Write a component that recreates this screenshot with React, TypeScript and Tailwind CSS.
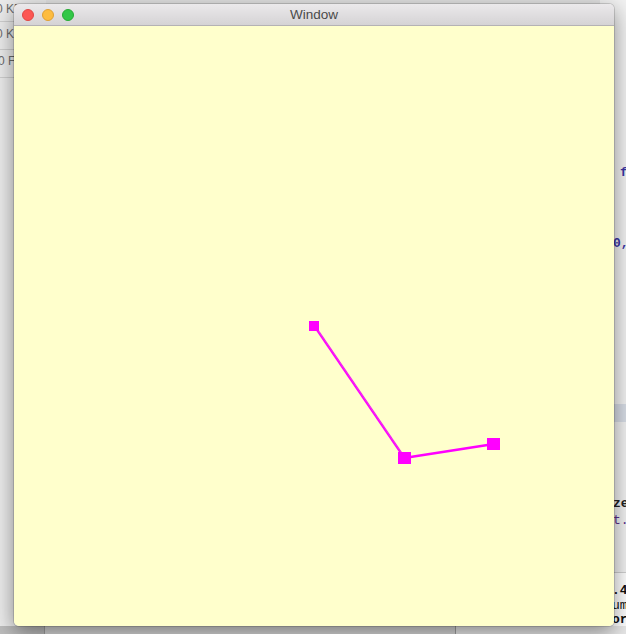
import React from 'react'

// Desktop behind the window: only thin slivers of it show at the edges.
function Backdrop() {
  return (
    <div className="absolute inset-0 bg-[#e4e4e4] font-['Liberation_Sans',sans-serif]">
      {/* left sidebar slivers */}
      <div className="absolute left-0 top-0 w-[46px] h-full flex flex-col bg-[#ececec] text-[12px] text-[#6b6b6b]">
        <div className="h-[22px] border-b border-[#cfcfcf] pt-[1px] leading-[16px] -ml-[4px]">0 KB/s</div>
        <div className="h-[28px] border-b border-[#cfcfcf] pt-[4px] leading-[16px] -ml-[4px]">0 KB/s</div>
        <div className="h-[28px] border-b border-[#cfcfcf] pt-[3px] leading-[16px] -ml-[2px]">0 Files</div>
        <div className="flex-1 border-r border-[#c4c4c4]" />
      </div>
      {/* right code editor slivers */}
      <div className="absolute left-[600px] top-0 w-[26px] h-full bg-[#f2f2f2] font-['Liberation_Mono',monospace] text-[13px] font-bold">
        <div className="absolute top-[163px] left-[20px] text-[#3b36a6]">f</div>
        <div className="absolute top-[234px] left-[13px] text-[#3b36a6]">0,</div>
        <div className="absolute top-[404px] left-0 w-full h-[18px] bg-[#d8dde6]" />
        <div className="absolute top-[494px] left-[13px] text-[#222]">ze</div>
        <div className="absolute top-[511px] left-[13px] text-[#5a2d8a] font-normal">t.</div>
        <div className="absolute top-[572px] left-0 w-full h-[56px] bg-white border-t border-[#d0d0d0]" />
        <div className="absolute top-[581px] left-[12px] text-[#111]">.4</div>
        <div className="absolute top-[596px] left-[12px] text-[#111] font-normal">um</div>
        <div className="absolute top-[610px] left-[12px] text-[#111]">or</div>
      </div>
      {/* bottom strip */}
      <div className="absolute left-0 top-[626px] w-full h-[8px] flex bg-[#cfcfcf]">
        <div className="w-[45px] border-r border-[#9f9f9f] bg-[#bdbdbd]" />
        <div className="w-[411px] border-r border-[#9f9f9f] bg-[#d6d6d6]" />
        <div className="flex-1 bg-[#e8e8e8]" />
      </div>
    </div>
  )
}

function TrafficLights() {
  return (
    <div className="flex items-center gap-[8px] pl-[8px]">
      <span className="w-[12px] h-[12px] rounded-full bg-[#fc5753] border border-[#df4744]" />
      <span className="w-[12px] h-[12px] rounded-full bg-[#fdbc40] border border-[#de9f34]" />
      <span className="w-[12px] h-[12px] rounded-full bg-[#33c748] border border-[#27aa35]" />
    </div>
  )
}

function Figure() {
  return (
    <svg width={600} height={600} viewBox="0 0 600 600" className="block">
      <line x1={300} y1={300} x2={390} y2={432} stroke="#ff00ff" strokeWidth={1.6} />
      <line x1={302} y1={301} x2={392} y2={433} stroke="#f020f0" strokeWidth={1.2} />
      <line x1={390} y1={432} x2={480} y2={418} stroke="#ff00ff" strokeWidth={2.6} />
      <rect x={295} y={295} width={10} height={10} fill="#ff00ff" />
      <rect x={384} y={426} width={13} height={12} fill="#ff00ff" />
      <rect x={473} y={412} width={13} height={12} fill="#ff00ff" />
    </svg>
  )
}

export default function App() {
  return (
    <div className="relative w-[626px] h-[634px] overflow-hidden">
      <Backdrop />
      <div className="absolute left-[14px] top-[4px] w-[600px] flex flex-col rounded-[5px] overflow-hidden shadow-[0_6px_22px_rgba(0,0,0,0.45),0_0_0_1px_rgba(0,0,0,0.14)]">
        <div className="relative h-[22px] flex items-center bg-gradient-to-b from-[#ebe9eb] to-[#d5d3d5] border-b border-[#b4b2b4]">
          <TrafficLights />
          <div className="absolute inset-0 flex items-center justify-center pt-[1px] text-[13.5px] text-[#4a4a4a] font-['Liberation_Sans',sans-serif]">
            Window
          </div>
        </div>
        <div className="bg-[#ffffcc]">
          <Figure />
        </div>
      </div>
    </div>
  )
}
